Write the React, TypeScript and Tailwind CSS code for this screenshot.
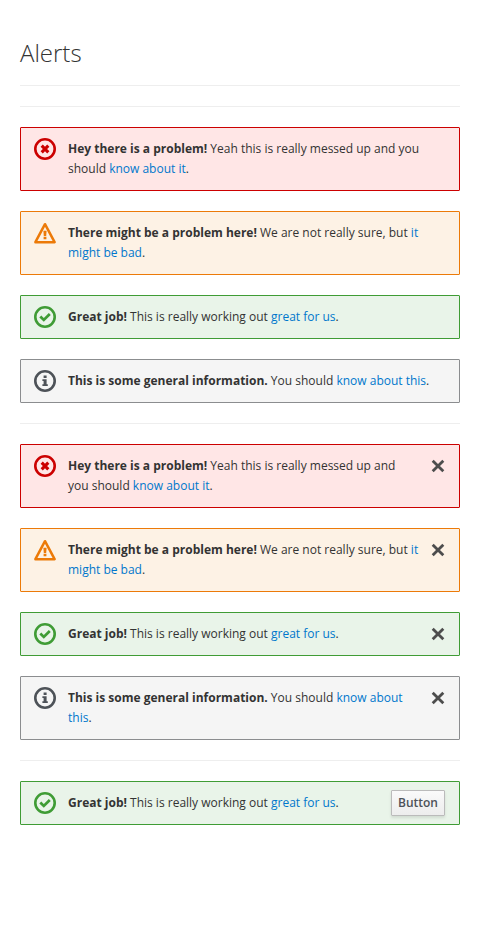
import type { ReactNode } from "react";

type Kind = "danger" | "warning" | "success" | "info";

const boxes: Record<Kind, string> = {
  danger: "border-[#cc0000] bg-[#ffe6e6]",
  warning: "border-[#ec7a08] bg-[#fdf2e5]",
  success: "border-[#3f9c35] bg-[#e9f4e9]",
  info: "border-[#8b8d8f] bg-[#f5f5f5]",
};

function StatusIcon({ kind }: { kind: Kind }) {
  if (kind === "warning") {
    return (
      <svg viewBox="0 0 22 22" className="-my-px size-[22px] shrink-0" fill="none" aria-hidden="true">
        <path d="M11 2.2 20.6 20.2H1.4Z" stroke="#ec7a08" strokeWidth="2.5" strokeLinejoin="round" />
        <path d="M9.4 8.8h3.2l-.4 5.2H9.8zM9.6 14.8h2.8v2.4H9.6z" fill="#ec7a08" />
      </svg>
    );
  }
  const color = { danger: "#cc0000", success: "#3f9c35", info: "#4d5258" }[kind];
  return (
    <svg viewBox="0 0 22 22" className="-my-px size-[22px] shrink-0" fill="none" stroke={color} aria-hidden="true">
      <circle cx="11" cy="11" r="9.7" strokeWidth="2.6" />
      {kind === "danger" && <path d="m7.7 7.7 6.6 6.6m0-6.6-6.6 6.6" strokeWidth="3.1" />}
      {kind === "success" && <path d="m6.3 10.5 3.5 3.4 6-5.8" strokeWidth="2.8" />}
      {kind === "info" && (
        <path
          d="M9.6 5.5h3v2.6h-3zM8.4 9.2h4.2v5.1h1.2V16H8.4v-1.7h1.2v-3.4H8.4z"
          fill={color}
          stroke="none"
        />
      )}
    </svg>
  );
}

function Alert({ kind, action, children }: { kind: Kind; action?: ReactNode; children: ReactNode }) {
  return (
    <div role="alert" className={`flex items-start rounded-[1px] border px-[13px] py-[11px] ${boxes[kind]}`}>
      <StatusIcon kind={kind} />
      <p className="ml-3 min-w-0 flex-1">{children}</p>
      {action}
    </div>
  );
}

function Close() {
  return (
    <button type="button" aria-label="Close" className="ml-[11px] mt-0.5 size-4 shrink-0">
      <svg viewBox="0 0 16 16" className="size-4" fill="none" stroke="#4d4d4d" strokeWidth="2.8" aria-hidden="true">
        <path d="m2.7 2.7 10.6 10.6m0-10.6L2.7 13.3" />
      </svg>
    </button>
  );
}

function Link({ children }: { children: ReactNode }) {
  return (
    <a href="#" className="text-[#0077cc]">
      {children}
    </a>
  );
}

const messages: Record<Kind, ReactNode> = {
  danger: (
    <>
      <strong>Hey there is a problem!</strong> Yeah this is really messed up and you should{" "}
      <Link>know about it</Link>.
    </>
  ),
  warning: (
    <>
      <strong>There might be a problem here!</strong> We are not really sure, but <Link>it might be bad</Link>.
    </>
  ),
  success: (
    <>
      <strong>Great job!</strong> This is really working out <Link>great for us</Link>.
    </>
  ),
  info: (
    <>
      <strong>This is some general information.</strong> You should <Link>know about this</Link>.
    </>
  ),
};

const kinds: Kind[] = ["danger", "warning", "success", "info"];

export default function App() {
  return (
    <main className="flex flex-col gap-5 bg-white px-5 py-10 font-['Open_Sans',sans-serif] text-xs leading-5 text-[#333333]">
      <h1 className="mb-[-1px] text-2xl leading-[26px] font-light">Alerts</h1>
      <hr className="border-[#eeeeee]" />
      <hr className="border-[#eeeeee]" />
      {kinds.map((kind) => (
        <Alert key={kind} kind={kind}>
          {messages[kind]}
        </Alert>
      ))}
      <hr className="border-[#eeeeee]" />
      {kinds.map((kind) => (
        <Alert key={kind} kind={kind} action={<Close />}>
          {messages[kind]}
        </Alert>
      ))}
      <hr className="border-[#eeeeee]" />
      <Alert
        kind="success"
        action={
          <button
            type="button"
            className="-my-[3px] mr-px h-[26px] shrink-0 rounded-[1px] border border-[#bbbbbb] bg-linear-to-b from-[#fafafa] to-[#ededed] px-1.5 font-semibold text-[#4d5258] shadow-[0_2px_3px_rgba(3,3,3,0.1)]"
          >
            Button
          </button>
        }
      >
        {messages.success}
      </Alert>
    </main>
  );
}
